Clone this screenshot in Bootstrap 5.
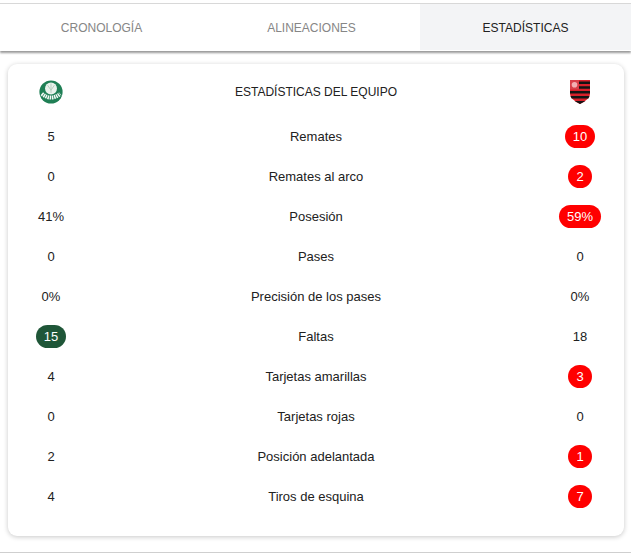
<!DOCTYPE html>
<html lang="es">
<head>
<meta charset="utf-8">
<title>Estadísticas</title>
<link href="https://cdn.jsdelivr.net/npm/bootstrap@5.3.0/dist/css/bootstrap.min.css" rel="stylesheet">
<style>
html,body{height:554px;overflow:hidden;background:#fff;font-family:"Liberation Sans",Arial,sans-serif;font-size:13px;color:#212529}
.pg{padding-top:3px}
.tabbar{border-top:1px solid #d8d8d8;height:48px;box-shadow:0 2px 2px rgba(0,0,0,.4)}
.tabitem{display:flex;align-items:center;justify-content:center;color:#868686;font-size:12px;padding-top:1px}
.tab-a{flex:203 1 0}
.tab-b{flex:217 1 0}
.tab-c{flex:211 1 0;background:#f3f4f6;color:#212121;margin-bottom:1px}
.panel{margin:13px 7px 0 8px;height:472px;background:#fff;border-radius:9px;box-shadow:0 1px 5px rgba(0,0,0,.22);padding-top:8px}
.hdr{height:40px;color:#212121;margin-bottom:4px;font-size:12px}
.rowx{height:40px;color:#212121;padding-top:1px}
.side{width:86px;flex:none;display:flex;justify-content:center;align-items:center}
.side-r{padding-right:2px}
.mid{flex:1 1 0;text-align:center}
.pillx{display:inline-block;min-width:23px;text-align:center;padding:4px 8px;line-height:15px;border-radius:12px;color:#fff}
.win-r{background:#f00}
.win-g{background:#1f5638}
.endline{margin-top:16px;border-top:1px solid #cfcfcf}
</style>
</head>
<body>
<div class="pg">
  <div class="tabbar d-flex">
    <div class="tabitem tab-a">CRONOLOGÍA</div>
    <div class="tabitem tab-b">ALINEACIONES</div>
    <div class="tabitem tab-c">ESTADÍSTICAS</div>
  </div>
  <div class="panel">
    <div class="hdr d-flex align-items-center">
      <div class="side">
        <svg width="24" height="24" viewBox="0 0 24 24" aria-label="Palmeiras">
          <circle cx="12" cy="12" r="11.6" fill="#1f7f55"/>
          <circle cx="12" cy="8.6" r="6" fill="#e9f2ec"/>
          <path d="M12 3.4v9.5M8.6 5.2l3.4 5 3.4-5" stroke="#b7cfc0" stroke-width="1" fill="none"/>
          <path d="M2.8 13.8q9.2 7.6 18.4 0" stroke="#f4f9f6" stroke-width="4" fill="none" stroke-dasharray="1.5 .7"/>
        </svg>
      </div>
      <div class="mid">ESTADÍSTICAS DEL EQUIPO</div>
      <div class="side side-r">
        <svg width="20" height="24" viewBox="0 0 20 24" aria-label="Flamengo">
          <path d="M0 0H20V14Q20 19 10 24Q0 19 0 14Z" fill="#d8202a"/>
          <path d="M9 1.5H20V4H9ZM9 6.3H20V8.8H9ZM0 11H20V13.6H0ZM.6 16H19.4L18.4 18.6H1.6ZM4.6 21H15.4L10 24Z" fill="#141414"/>
          <rect width="9" height="9.5" fill="#d8404a"/>
          <circle cx="4.5" cy="4.8" r="2.8" fill="#f3b0b4"/>
        </svg>
      </div>
    </div>
    <div class="rowx d-flex align-items-center"><div class="side">5</div><div class="mid">Remates</div><div class="side side-r"><span class="pillx win-r">10</span></div></div>
    <div class="rowx d-flex align-items-center"><div class="side">0</div><div class="mid">Remates al arco</div><div class="side side-r"><span class="pillx win-r">2</span></div></div>
    <div class="rowx d-flex align-items-center"><div class="side">41%</div><div class="mid">Posesión</div><div class="side side-r"><span class="pillx win-r">59%</span></div></div>
    <div class="rowx d-flex align-items-center"><div class="side">0</div><div class="mid">Pases</div><div class="side side-r">0</div></div>
    <div class="rowx d-flex align-items-center"><div class="side">0%</div><div class="mid">Precisión de los pases</div><div class="side side-r">0%</div></div>
    <div class="rowx d-flex align-items-center"><div class="side"><span class="pillx win-g">15</span></div><div class="mid">Faltas</div><div class="side side-r">18</div></div>
    <div class="rowx d-flex align-items-center"><div class="side">4</div><div class="mid">Tarjetas amarillas</div><div class="side side-r"><span class="pillx win-r">3</span></div></div>
    <div class="rowx d-flex align-items-center"><div class="side">0</div><div class="mid">Tarjetas rojas</div><div class="side side-r">0</div></div>
    <div class="rowx d-flex align-items-center"><div class="side">2</div><div class="mid">Posición adelantada</div><div class="side side-r"><span class="pillx win-r">1</span></div></div>
    <div class="rowx d-flex align-items-center"><div class="side">4</div><div class="mid">Tiros de esquina</div><div class="side side-r"><span class="pillx win-r">7</span></div></div>
  </div>
  <div class="endline"></div>
</div>
<script src="https://cdn.jsdelivr.net/npm/bootstrap@5.3.0/dist/js/bootstrap.bundle.min.js"></script>
</body>
</html>
